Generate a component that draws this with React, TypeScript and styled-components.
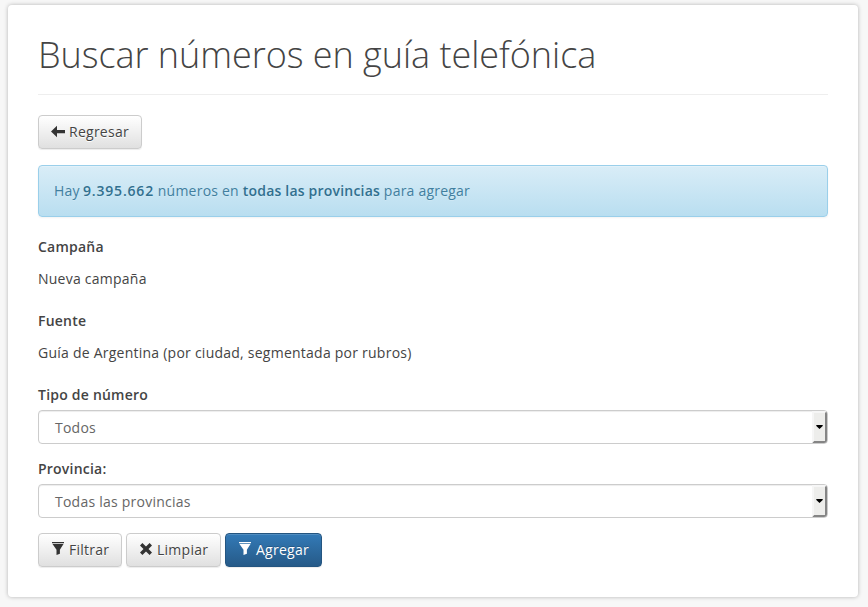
import React from "react";
import styled, { createGlobalStyle, css } from "styled-components";

const Global = createGlobalStyle`
  *, *::before, *::after { box-sizing: border-box; }
  body {
    margin: 0;
    background: #f7f7f7;
    color: #444;
    font: 14px/20px "Open Sans", sans-serif;
    letter-spacing: 0.24px;
  }
`;

const Root = styled.div`
  display: flow-root;
  min-height: 607px;
`;

const Page = styled.main`
  width: 850px;
  height: 592px;
  margin: 5px 0 0 8px;
  padding: 0 30px;
  background: #fff;
  border-radius: 4px;
  box-shadow: 0 0 4px rgba(0, 0, 0, 0.27);
`;

const Header = styled.header`
  height: 90px;
  border-bottom: 1px solid #eee;
`;

const Title = styled.h1`
  margin: 0;
  padding-top: 30px;
  font-size: 36px;
  font-weight: 300;
  line-height: 40px;
  letter-spacing: -0.04px;
  white-space: nowrap;
`;

const Toolbar = styled.div<{ $top: number }>`
  display: flex;
  gap: 4px;
  margin-top: ${(p) => p.$top}px;
`;

const Button = styled.button<{ $width: number; $primary?: boolean }>`
  display: inline-flex;
  align-items: center;
  gap: 4px;
  width: ${(p) => p.$width}px;
  height: 34px;
  padding: 0 0 0 12px;
  font: 14px/20px "Open Sans", sans-serif;
  letter-spacing: 0.26px;
  color: #444;
  border: 1px solid #ccc;
  border-radius: 4px;
  background: linear-gradient(#fff, #e0e0e0);
  box-shadow: inset 0 1px 0 rgba(255, 255, 255, 0.15), 0 1px 1px rgba(0, 0, 0, 0.075);
  text-shadow: 0 1px 0 #fff;
  ${(p) =>
    p.$primary &&
    css`
      color: #fff;
      border-color: #245580;
      background: linear-gradient(#337ab7, #265a88);
      text-shadow: 0 -1px 0 rgba(0, 0, 0, 0.2);
    `}
`;

const Glyph = styled.svg<{ $light?: boolean }>`
  flex: none;
  width: 14px;
  height: 14px;
  overflow: visible;
  fill: ${(p) => (p.$light ? "#fff" : "#333")};
`;

const Alert = styled.div`
  height: 52px;
  margin-top: 16px;
  padding: 15px;
  color: #417f9f;
  letter-spacing: 0.22px;
  border: 1px solid #9acfea;
  border-radius: 4px;
  background: linear-gradient(#d9edf7, #b9def0);
  text-shadow: 0 1px 0 rgba(255, 255, 255, 0.2);
  box-shadow: inset 0 1px 0 rgba(255, 255, 255, 0.25), 0 1px 2px rgba(0, 0, 0, 0.05);
`;

const Strong = styled.strong<{ $digits?: boolean }>`
  margin-left: ${(p) => (p.$digits ? -0.6 : 0)}px;
  font-weight: 600;
  color: #31708f;
  letter-spacing: ${(p) => (p.$digits ? 0.8 : 0.2)}px;
`;

const Field = styled.section<{ $top: number }>`
  margin-top: ${(p) => p.$top}px;
`;

const Label = styled.div`
  height: 20px;
  font-weight: 600;
  letter-spacing: 0.22px;
`;

const Value = styled.div`
  margin-top: 12px;
  height: 20px;
`;

const SelectBox = styled.div`
  display: flex;
  justify-content: space-between;
  height: 34px;
  margin-top: 5px;
  padding-left: 16px;
  line-height: 34px;
  color: #666;
  border: 1px solid #ccc;
  border-radius: 4px;
  box-shadow: inset 0 1px 1px rgba(0, 0, 0, 0.075);
`;

const Arrow = styled.span`
  display: flex;
  justify-content: center;
  width: 15px;
  height: 32px;
  padding-top: 12px;
  background: #ededeb;
  border: 2px solid;
  border-color: #f6f6f6 #858585 #858585 #f6f6f6;
  border-radius: 0 3px 3px 0;
`;

const Caret = styled.svg`
  flex: none;
  width: 7px;
  height: 4px;
  fill: #000;
`;

const DropArrow = () => (
  <Arrow>
    <Caret viewBox="0 0 7 4"><path d="M0.3 0H6.7V1L3.5 4L0.3 1Z" /></Caret>
  </Arrow>
);

const ArrowLeft = () => (
  <Glyph viewBox="0 0 14 14"><path d="M0 6.5 6 0.8V4.9H14V8.2H6V12.3Z" /></Glyph>
);

const Filter = ({ light }: { light?: boolean }) => (
  <Glyph $light={light} viewBox="0 0 14 14">
    <path d="M1 -1H13V0.3H1ZM1.5 1H12.5L8.9 6.7V10.7L5.5 12V6.7Z" />
  </Glyph>
);

const Remove = () => (
  <Glyph viewBox="0 0 14 14">
    <path d="M3.4 0 7 3.5 10.6 0 13 2.4 9.5 6 13 9.6 10.6 12 7 8.5 3.4 12 1 9.6 4.5 6 1 2.4Z" />
  </Glyph>
);

export default function App() {
  return (
    <Root>
      <Global />
      <Page>
        <Header><Title>Buscar números en guía telefónica</Title></Header>
        <Toolbar $top={20}><Button $width={104}><ArrowLeft />Regresar</Button></Toolbar>
        <Alert>
          Hay <Strong $digits>9.395.662</Strong> números en <Strong>todas las provincias</Strong> para agregar
        </Alert>
        <Field $top={20}><Label>Campaña</Label><Value>Nueva campaña</Value></Field>
        <Field $top={22}><Label>Fuente</Label><Value>Guía de Argentina (por ciudad, segmentada por rubros)</Value></Field>
        <Field $top={22}><Label>Tipo de número</Label><SelectBox>Todos<DropArrow /></SelectBox></Field>
        <Field $top={15}><Label>Provincia:</Label><SelectBox>Todas las provincias<DropArrow /></SelectBox></Field>
        <Toolbar $top={15}>
          <Button $width={84}><Filter />Filtrar</Button>
          <Button $width={95}><Remove />Limpiar</Button>
          <Button $width={97} $primary><Filter light />Agregar</Button>
        </Toolbar>
      </Page>
    </Root>
  );
}
